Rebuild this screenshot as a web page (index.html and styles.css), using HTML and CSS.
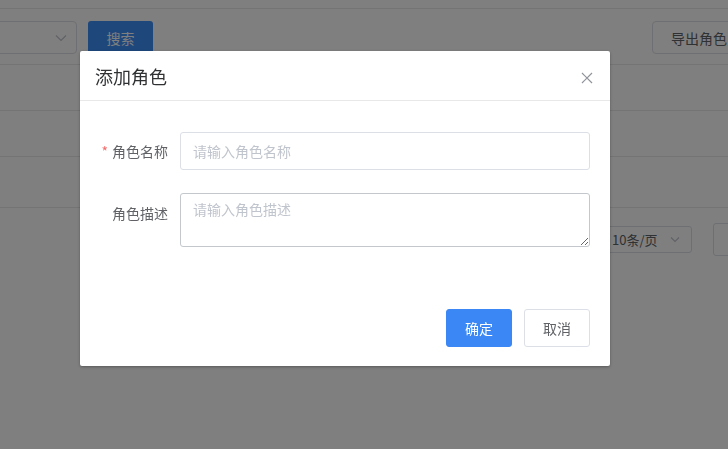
FILE: index.html
```html
<!DOCTYPE html>
<html lang="zh-CN">
<head>
<meta charset="utf-8">
<title>添加角色</title>
<link rel="stylesheet" href="styles.css">
</head>
<body>
<div class="page">
  <div class="topbar"></div>
  <div class="toolbar">
    <div class="select">
      <span class="select-text"></span>
      <svg class="chev" width="12" height="8" viewBox="0 0 12 8"><path d="M1 1.5 L6 6.5 L11 1.5" fill="none" stroke="#c0c4cc" stroke-width="1.2"/></svg>
    </div>
    <button class="btn-search">搜索</button>
    <div class="spacer"></div>
    <button class="btn-export">导出角色</button>
  </div>
  <div class="table">
    <div class="row r1"></div>
    <div class="row r2"></div>
    <div class="row r3"></div>
  </div>
  <div class="pager">
    <div class="pager-size">
      <span>10条/页</span>
      <svg class="chev" width="10" height="7" viewBox="0 0 10 7"><path d="M1 1.5 L5 5.5 L9 1.5" fill="none" stroke="#c0c4cc" stroke-width="1.1"/></svg>
    </div>
    <div class="pager-jump"></div>
  </div>
</div>
<div class="overlay"></div>
<div class="dialog">
  <div class="dialog-header">
    <span class="dialog-title">添加角色</span>
    <svg class="close" width="12" height="12" viewBox="0 0 12 12"><path d="M1 1 L11 11 M11 1 L1 11" stroke="#909399" stroke-width="1.2" fill="none"/></svg>
  </div>
  <div class="dialog-body">
    <div class="form-item">
      <label class="form-label"><span class="req">*</span>角色名称</label>
      <input class="input" type="text" placeholder="请输入角色名称">
    </div>
    <div class="form-item">
      <label class="form-label desc-label">角色描述</label>
      <textarea class="textarea" placeholder="请输入角色描述"></textarea>
    </div>
  </div>
  <div class="dialog-footer">
    <button class="btn btn-primary">确定</button>
    <button class="btn btn-default">取消</button>
  </div>
</div>
</body>
</html>
```
FILE: styles.css
```css
* { box-sizing: border-box; }
html, body {
  margin: 0;
  padding: 0;
  width: 728px;
  height: 449px;
  overflow: hidden;
  background: #fff;
  font-family: "Noto Sans CJK SC", "Noto Sans", sans-serif;
  font-size: 14px;
  color: #606266;
}
.page { width: 728px; }
.topbar {
  height: 9px;
  border-bottom: 1px solid #e8e8e8;
}
.toolbar {
  display: flex;
  align-items: flex-start;
  padding-top: 12px;
  height: 56px;
  border-bottom: 1px solid #e8e8e8;
}
.select {
  margin-left: -120px;
  width: 197px;
  height: 33px;
  border: 1px solid #dcdfe6;
  border-radius: 4px;
  display: flex;
  align-items: center;
  justify-content: flex-end;
  padding-right: 9px;
}
.btn-search {
  margin-left: 11px;
  width: 65px;
  height: 33px;
  border: none;
  border-radius: 3px;
  background: #3d8ef8;
  color: #fff;
  font-family: inherit;
  font-size: 14px;
  padding: 0;
}
.spacer { flex: 1; }
.btn-export {
  margin-right: -30px;
  width: 106px;
  height: 33px;
  border: 1px solid #dcdfe6;
  border-radius: 4px;
  background: #fff;
  color: #606266;
  font-family: inherit;
  font-size: 14px;
  text-align: left;
  padding: 0 0 0 18px;
}
.row { border-bottom: 1px solid #e8e8e8; }
.r1 { height: 46px; }
.r2 { height: 46px; }
.r3 { height: 51px; }
.pager {
  display: flex;
  align-items: center;
  justify-content: flex-end;
  padding-top: 15px;
  gap: 21px;
  margin-right: -30px;
}
.pager-size {
  width: 102px;
  height: 27px;
  border: 1px solid #dcdfe6;
  border-radius: 3px;
  display: flex;
  align-items: center;
  justify-content: space-between;
  padding: 0 11px 0 21px;
  color: #606266;
  font-size: 13px;
}
.pager-jump {
  width: 45px;
  height: 33px;
  border: 1px solid #dcdfe6;
  border-radius: 3px;
}
.overlay {
  position: fixed;
  inset: 0;
  background: rgba(0, 0, 0, 0.5);
}
.dialog {
  position: absolute;
  left: 80px;
  top: 51px;
  width: 530px;
  height: 315px;
  background: #fff;
  border-radius: 2px;
  box-shadow: 0 1px 3px rgba(0, 0, 0, 0.3);
  display: flex;
  flex-direction: column;
}
.dialog-header {
  height: 50px;
  border-bottom: 1px solid #e8e8e8;
  display: flex;
  align-items: center;
  justify-content: space-between;
  padding: 0 17px 0 15px;
}
.dialog-title {
  font-size: 18px;
  color: #303133;
  line-height: 24px;
}
.close { display: block; margin-top: 5px; }
.dialog-body {
  padding: 31px 20px 0 20px;
  display: flex;
  flex-direction: column;
  gap: 23px;
}
.form-item { display: flex; align-items: flex-start; }
.form-label {
  width: 80px;
  flex: none;
  text-align: right;
  padding-right: 12px;
  line-height: 38px;
  color: #606266;
  font-size: 14px;
}
.desc-label { line-height: 40px; }
.req { color: #f56c6c; margin-right: 4px; }
.input, .textarea {
  flex: 1;
  font-family: inherit;
  font-size: 14px;
  color: #606266;
  border-radius: 3px;
  outline: none;
  background: #fff;
}
.input {
  height: 38px;
  border: 1px solid #dcdfe6;
  padding: 0 12px;
}
.textarea {
  height: 54px;
  border: 1px solid #c4c7cc;
  padding: 5px 12px;
  line-height: 21px;
  resize: vertical;
}
.input::placeholder, .textarea::placeholder { color: #c0c4cc; }
.dialog-footer {
  margin-top: auto;
  padding: 0 20px 19px;
  display: flex;
  justify-content: flex-end;
  gap: 12px;
}
.btn {
  width: 66px;
  height: 38px;
  border-radius: 3px;
  font-family: inherit;
  font-size: 14px;
  padding: 0;
}
.btn-primary {
  background: #3a87f5;
  border: 1px solid #3a87f5;
  color: #fff;
}
.btn-default {
  background: #fff;
  border: 1px solid #dcdfe6;
  color: #606266;
}
```
